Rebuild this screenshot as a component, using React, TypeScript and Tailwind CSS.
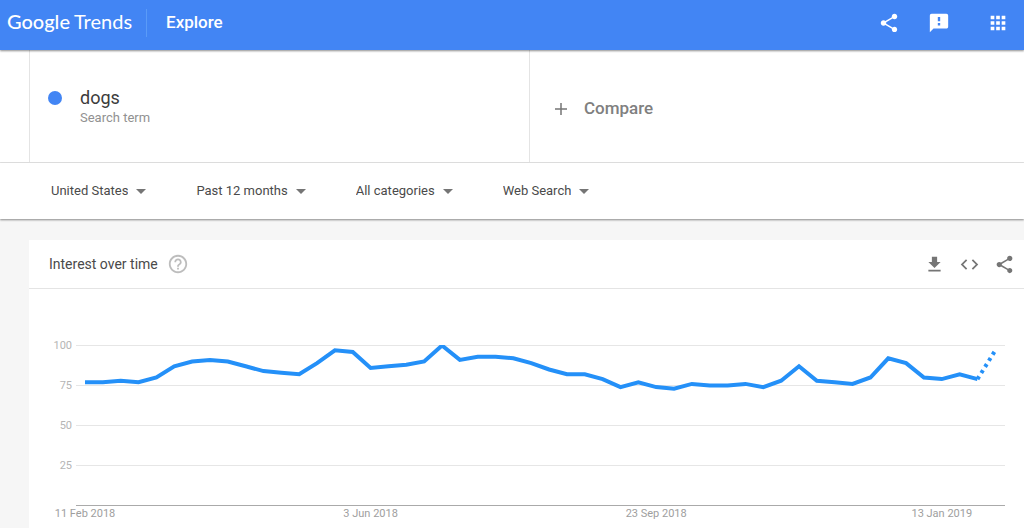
import { MdApps, MdCode, MdFileDownload, MdHelpOutline, MdShare } from "react-icons/md";

interface filterData {
  id: string;
  label: string;
  value: string;
}

interface iconButtonData {
  label: string;
  icon: React.ReactNode;
}

const filters: filterData[] = [
  { id: "geo", label: "Region", value: "United States" },
  { id: "time", label: "Time range", value: "Past 12 months" },
  { id: "category", label: "Category", value: "All categories" },
  { id: "source", label: "Search type", value: "Web Search" },
];

// weekly interest, the last value is still partial
const interest = [
  77, 77, 78, 77, 80, 87, 90, 91, 90, 87, 84, 83, 82, 89, 97, 96, 86, 87, 88, 90, 100, 91, 93, 93, 92, 89,
  85, 82, 82, 79, 74, 77, 74, 73, 76, 75, 75, 76, 74, 78, 87, 78, 77, 76, 80, 92, 89, 80, 79, 82, 79, 97,
];

const ticks = [
  { week: 0, label: "11 Feb 2018" },
  { week: 16, label: "3 Jun 2018" },
  { week: 32, label: "23 Sep 2018" },
  { week: 48, label: "13 Jan 2019" },
];

const getX = (week: number) => 56 + week * 17.85;
const getY = (value: number) => 216.5 - value * 1.6;
const toPoints = (from: number, to: number) =>
  interest
    .slice(from, to)
    .map((value, i) => `${getX(from + i)},${getY(value)}`)
    .join(" ");

const FeedbackIcon = () => (
  <svg width="22" height="22" viewBox="0 0 24 24" fill="currentColor" fillRule="evenodd">
    <path d="M20 2H4c-1.1 0-2 .9-2 2v18l4-4h14c1.1 0 2-.9 2-2V4c0-1.1-.9-2-2-2zM10.7 5.5h2.6v4.7h-2.6zM10.7 12h2.6v2.6h-2.6z" />
  </svg>
);

const IconButton = ({ label, icon }: iconButtonData) => (
  <button type="button" aria-label={label} className="cursor-pointer">
    {icon}
  </button>
);

const Filter = ({ id, label, value }: filterData) => (
  <div className="flex items-center gap-2">
    <select id={id} aria-label={label} className="field-sizing-content appearance-none bg-transparent text-[13px] text-[#4a4a4a] cursor-pointer">
      <option>{value}</option>
    </select>
    <svg width="10" height="5" viewBox="0 0 10 5" className="fill-[#757575]">
      <path d="M0 0h10L5 5z" />
    </svg>
  </div>
);

const Header = () => (
  <header className="relative z-10 flex items-center h-[50px] pl-[7px] pr-[15px] pb-1 bg-[#4285f4] text-white shadow-[0_1px_2px_rgba(0,0,0,0.45)]">
    <a href="/trends" className="flex items-center gap-1 h-7 pr-[14px] pb-1 border-r border-[#5a9bf8] font-[Lato,sans-serif] text-xl">
      <span className="font-medium">Google</span>
      <span>Trends</span>
    </a>
    <h1 className="pl-[19px] text-[17px] font-medium">Explore</h1>
    <div className="flex items-center ml-auto">
      <IconButton label="Share" icon={<MdShare size={22} />} />
      <div className="pl-7 pr-[37px] flex">
        <IconButton label="Send feedback" icon={<FeedbackIcon />} />
      </div>
      <IconButton label="Google apps" icon={<MdApps size={22} />} />
    </div>
  </header>
);

const SearchTerms = () => (
  <section className="flex h-[113px] pl-[29px] bg-white border-b border-[#e4e4e4]">
    <div className="flex items-center w-[501px] border-x border-[#e4e4e4] pl-[18px]">
      <span className="size-3.5 rounded-full bg-[#4285f4] mb-4" />
      <div className="pl-[18px]">
        <p className="text-lg leading-6 text-[#3c3c3c]">dogs</p>
        <p className="text-[13px] leading-4 text-[#919191]">Search term</p>
      </div>
    </div>
    <button type="button" className="flex items-center gap-4 pl-6 pt-1.5 text-[#808080] cursor-pointer">
      <svg width="14" height="14" viewBox="0 0 14 14" className="stroke-[#757575]">
        <path d="M7 1v12M1 7h12" strokeWidth="1.5" />
      </svg>
      <span className="text-[17px] font-medium">Compare</span>
    </button>
  </section>
);

const InterestChart = () => (
  <svg viewBox="0 0 995 239" className="block w-full text-[11px]" role="img" aria-label="Interest over time">
    <clipPath id="plot">
      <rect x="47" y="56" width="930" height="161" />
    </clipPath>
    {[100, 75, 50, 25].map((value) => (
      <g key={value}>
        <line x1="47" x2="976" y1={getY(value)} y2={getY(value)} stroke="#e6e6e6" />
        <text x="43" y={getY(value) + 3} textAnchor="end" fill="#b5b5b5">{value}</text>
      </g>
    ))}
    <line x1="47" x2="976" y1="216.5" y2="216.5" stroke="#aaaaaa" />
    {ticks.map((tick) => (
      <text key={tick.week} x={getX(tick.week)} y="228" textAnchor="middle" fill="#9e9e9e">{tick.label}</text>
    ))}
    <g clipPath="url(#plot)" fill="none" stroke="#2490f8" strokeWidth="4">
      <polyline points={toPoints(0, 51)} />
      <polyline points={toPoints(50, 52)} strokeDasharray="3.2 4" />
    </g>
  </svg>
);

const App = () => {
  return (
    <div className="flex flex-col min-h-screen bg-[#f6f6f6] font-[Roboto,sans-serif]">
      <Header />
      <SearchTerms />
      <nav aria-label="Filters" className="flex items-center gap-[50px] h-14 pl-[51px] bg-white shadow-[0_1px_2px_rgba(0,0,0,0.45)]">
        {filters.map((filter) => (
          <Filter key={filter.id} {...filter} />
        ))}
      </nav>
      <main className="flex-1 flex flex-col pt-[21px] pl-[29px]">
        <section className="flex-1 bg-white">
          <div className="flex items-center h-[49px] pl-5 pr-[9px] border-b border-[#e4e4e4]">
            <h2 className="pr-[9px] text-sm text-[#4a4a4a]">Interest over time</h2>
            <button type="button" aria-label="Help" className="text-[#bdbdbd] cursor-pointer">
              <MdHelpOutline size={22} />
            </button>
            <div className="flex items-center gap-3.5 ml-auto text-[#757575]">
              <IconButton label="Download" icon={<MdFileDownload size={21} />} />
              <IconButton label="Embed" icon={<MdCode size={21} />} />
              <IconButton label="Share chart" icon={<MdShare size={21} />} />
            </div>
          </div>
          <InterestChart />
        </section>
      </main>
    </div>
  );
};

export default App;
